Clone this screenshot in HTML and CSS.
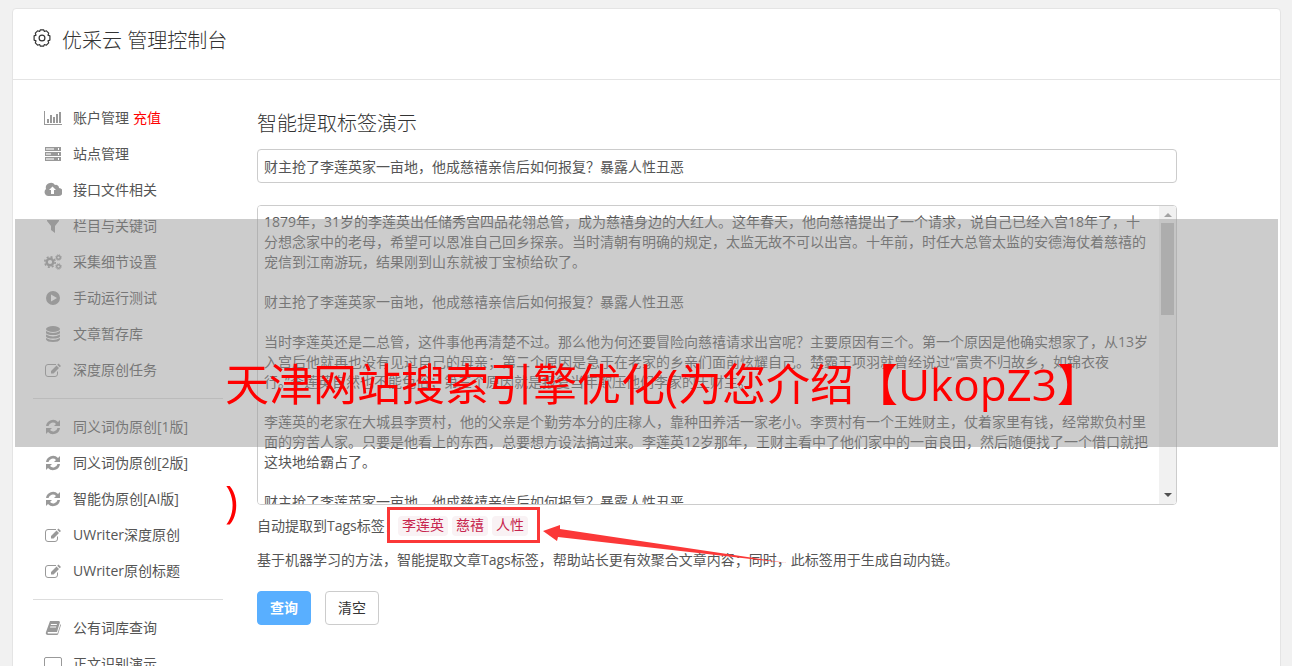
FILE: index.html
```html
<!DOCTYPE html>
<html lang="zh-CN">
<head>
    <meta charset="UTF-8">
    <meta name="viewport" content="width=device-width, initial-scale=1.0">
    <title>优采云 管理控制台</title>
    <link rel="stylesheet" href="styles.css">
</head>
<body>

    <!-- 图标 -->
    <svg class="sprite" width="0" height="0">
        <symbol id="i-chart" viewBox="0 0 18 16"><path d="M0 1h1v13h17v1H0zM3 9h2v4H3zM6 5h2v8H6zM9 7h2v6H9zM12 4h2v9h-2zM15 2h2v11h-2z"/></symbol>
        <symbol id="i-server" viewBox="0 0 18 16"><path fill-rule="evenodd" d="M1 1h16v4H1zM2 2v2h8V2zM14 2v2h1V2zM1 6h16v4H1zM2 7v2h5V7zM14 7v2h1V7zM1 11h16v4H1zM2 12v2h8v-2zM14 12v2h1v-2z"/><path opacity=".45" d="M2 2h8v2H2zM2 7h5v2H2zM2 12h8v2H2z"/></symbol>
        <symbol id="i-cloud" viewBox="0 0 18 16"><path fill-rule="evenodd" d="M4 14a4 4 0 0 1-2-7 5 5 0 0 1 9-4 3 3 0 0 1 4 3 4 4 0 0 1-1 8zM8.500 4.500L5 8h2v4h3V8h2z"/></symbol>
        <symbol id="i-filter" viewBox="0 0 18 16"><path d="M3 2h12v1l-4 5v7l-4-3V8L3 3z"/></symbol>
        <symbol id="i-cogs" viewBox="0 0 18 16"><g fill="none" stroke="currentColor"><circle cx="6" cy="8" r="3.300" stroke-width="2.400"/><circle cx="6" cy="8" r="5.200" stroke-width="1.600" stroke-dasharray="2.040 2.040"/><circle cx="14.500" cy="3.500" r="1.800" stroke-width="1.400"/><circle cx="14.500" cy="3.500" r="2.800" stroke-dasharray="1.100 1.100"/><circle cx="14.500" cy="12.500" r="1.800" stroke-width="1.400"/><circle cx="14.500" cy="12.500" r="2.800" stroke-dasharray="1.100 1.100"/></g></symbol>
        <symbol id="i-play" viewBox="0 0 18 16"><path fill-rule="evenodd" d="M9 1a7 7 0 1 0 0 14A7 7 0 1 0 9 1zM7 4.500l6 3.500-6 3.500z"/></symbol>
        <symbol id="i-db" viewBox="0 0 18 16"><ellipse cx="9" cy="3" rx="7" ry="3"/><path d="M2 5q7 4 14 0v2q-1 2-7 2T2 7zM2 8.500q7 4 14 0v2q-1 2-7 2t-7-2zM2 12q7 4 14 0v1.500q-1 2.500-7 2.500t-7-2.500z"/></symbol>
        <symbol id="i-edit" viewBox="0 0 18 16"><path fill="none" stroke="currentColor" d="M12 2.500H4a2.500 2.500 0 0 0-2.500 2.500v7A2.500 2.500 0 0 0 4 14.500h7a2.500 2.500 0 0 0 2.500-2.500V9.500"/><path d="M14.500 1.500l2.500 2.500-1.300 1.300-2.500-2.500zM12.500 3.500L15 6l-5.500 5.500H7V9z"/></symbol>
        <symbol id="i-sync" viewBox="0 0 18 16"><path d="M2 7a7 7 0 0 1 12-4l2-2v6h-6l2-2a4.400 4.400 0 0 0-7.500 2zM16 9a7 7 0 0 1-12 4l-2 2V9h6l-2 2a4.400 4.400 0 0 0 7.500-2z"/></symbol>
        <symbol id="i-book" viewBox="0 0 18 16"><path fill-rule="evenodd" d="M6 1h9l1 1-3 10H4q-1 .5 0 1.500h9.500L16.500 4l.5 1-3 9.500-1 .5H4q-3-.5-2-3zM7 4l-.3 1h6l.3-1zM6.300 6.500L6 7.500h6l.3-1z"/></symbol>
        <symbol id="i-screen" viewBox="0 0 18 16"><path fill="none" stroke="currentColor" d="M2 1.500h14q1.500 0 1.500 1.500v8q0 1.500-1.500 1.500H2Q.5 12.500.5 11V3q0-1.500 1.500-1.500zM6 15h6"/></symbol>
    </svg>

    <div class="panel">
        <header class="panel-header">
            <svg class="gear" viewBox="0 0 18 18" fill="none" stroke="currentColor" stroke-width="1.200" stroke-linejoin="round"><circle cx="9" cy="9" r="2.900"/><path d="M7.400.8h3.200l.8 1.700 2-.7 2.300 2.300-.7 2 1.900.8v4.200l-1.900.8.7 2-2.300 2.300-2-.7-.8 1.700H7.400l-.8-1.700-2 .7-2.300-2.300.7-2-1.900-.8V6.900l1.900-.8-.7-2 2.300-2.300 2 .7z"/></svg>
            <h1>优采云 管理控制台</h1>
        </header>

        <div class="panel-body">
            <nav class="sidebar">
                <a href="#"><svg><use href="#i-chart"/></svg>账户管理 <span class="recharge">充值</span></a>
                <a href="#"><svg><use href="#i-server"/></svg>站点管理</a>
                <a href="#"><svg><use href="#i-cloud"/></svg>接口文件相关</a>
                <a href="#"><svg><use href="#i-filter"/></svg>栏目与关键词</a>
                <a href="#"><svg><use href="#i-cogs"/></svg>采集细节设置</a>
                <a href="#"><svg><use href="#i-play"/></svg>手动运行测试</a>
                <a href="#"><svg><use href="#i-db"/></svg>文章暂存库</a>
                <a href="#"><svg><use href="#i-edit"/></svg>深度原创任务</a>
                <hr>
                <a href="#"><svg><use href="#i-sync"/></svg>同义词伪原创[1版]</a>
                <a href="#"><svg><use href="#i-sync"/></svg>同义词伪原创[2版]</a>
                <a href="#"><svg><use href="#i-sync"/></svg>智能伪原创[AI版]</a>
                <a href="#"><svg><use href="#i-edit"/></svg>UWriter深度原创</a>
                <a href="#"><svg><use href="#i-edit"/></svg>UWriter原创标题</a>
                <hr>
                <a href="#"><svg><use href="#i-book"/></svg>公有词库查询</a>
                <a href="#"><svg><use href="#i-screen"/></svg>正文识别演示</a>
            </nav>

            <main class="content">
                <h2>智能提取标签演示</h2>
                <input type="text" class="field" aria-label="标题" value="财主抢了李莲英家一亩地，他成慈禧亲信后如何报复？暴露人性丑恶">
                <div class="editor">
                    <textarea class="field" aria-label="正文">1879年，31岁的李莲英出任储秀宫四品花翎总管，成为慈禧身边的大红人。这年春天，他向慈禧提出了一个请求，说自己已经入宫18年了，十分想念家中的老母，希望可以恩准自己回乡探亲。当时清朝有明确的规定，太监无故不可以出宫。十年前，时任大总管太监的安德海仗着慈禧的宠信到江南游玩，结果刚到山东就被丁宝桢给砍了。

财主抢了李莲英家一亩地，他成慈禧亲信后如何报复？暴露人性丑恶

当时李莲英还是二总管，这件事他再清楚不过。那么他为何还要冒险向慈禧请求出宫呢？主要原因有三个。第一个原因是他确实想家了，从13岁入宫后他就再也没有见过自己的母亲；第二个原因是急于在老家的乡亲们面前炫耀自己。楚霸王项羽就曾经说过“富贵不归故乡，如锦衣夜
行。”李莲英自然也不能免俗；第三个原因就是报复当年欺压他们李家的王财主。

李莲英的老家在大城县李贾村，他的父亲是个勤劳本分的庄稼人，靠种田养活一家老小。李贾村有一个王姓财主，仗着家里有钱，经常欺负村里面的穷苦人家。只要是他看上的东西，总要想方设法搞过来。李莲英12岁那年，王财主看中了他们家中的一亩良田，然后随便找了一个借口就把这块地给霸占了。

财主抢了李莲英家一亩地，他成慈禧亲信后如何报复？暴露人性丑恶
</textarea>
                    <div class="scrollbar">
                        <svg viewBox="0 0 8 4"><path fill="#a3a3a3" d="M0 4l4-4 4 4z"/></svg>
                        <div class="thumb"></div>
                        <svg viewBox="0 0 8 4"><path fill="#505050" d="M0 0l4 4 4-4z"/></svg>
                    </div>
                </div>
                <div class="tags">
                    <span>自动提取到Tags标签：</span>
                    <div class="tag-box">
                        <code>李莲英</code><code>慈禧</code><code>人性</code>
                        <svg class="arrow" viewBox="0 0 246 50"><path d="M0 14L17 8v4l227 34L15 20l-1 4z"/></svg>
                    </div>
                </div>
                <p>基于机器学习的方法，智能提取文章Tags标签，帮助站长更有效聚合文章内容；同时，此标签用于生成自动内链。</p>
                <div class="buttons">
                    <button class="primary">查询</button>
                    <button>清空</button>
                </div>
            </main>
        </div>
    </div>

    <div class="band"></div>
    <div class="caption">天津网站搜索引擎优化(为您介绍【UkopZ3】<br>)</div>

</body>
</html>
```

FILE: styles.css
```css
* {
    box-sizing: border-box;
}
html {
    height: 100%;
    overflow: hidden;
}
body {
    height: 100%;
    margin: 0;
    padding: 8px 11px 0 12px;
    overflow: hidden;
    position: relative;
    background-color: #f1f1f1;
    color: #555;
    font-family: "Open Sans", "Noto Sans CJK SC", sans-serif;
    font-size: 14px;
    line-height: 20px;
}
.sprite {
    position: absolute;
}
.panel {
    background-color: #fff;
    border: 1px solid #e4e4e4;
    border-radius: 4px;
}
.panel-header {
    display: flex;
    align-items: flex-start;
    gap: 11px;
    height: 71px;
    padding: 18px 20px;
    border-bottom: 1px solid #e4e4e4;
    color: #333;
}
.gear {
    width: 18px;
    height: 18px;
    margin-top: 2px;
}
h1, h2 {
    margin: 0;
    color: #333;
    font-size: 20px;
    font-weight: 300;
    line-height: 28px;
}
.panel-body {
    display: flex;
    gap: 34px;
    padding: 20px;
}
.sidebar {
    flex: 0 0 190px;
}
.sidebar a {
    display: flex;
    align-items: center;
    height: 36px;
    padding-left: 11px;
    color: #555;
    text-decoration: none;
}
.sidebar svg {
    width: 18px;
    height: 16px;
    margin-right: 11px;
    color: #999;
    fill: #999;
}
.recharge {
    margin-left: 4px;
    color: #f00;
}
hr {
    height: 1px;
    margin: 10px 0;
    border: none;
    background-color: #ddd;
}
.content {
    flex: 1;
    padding: 10px 83px 0 0;
}
.field {
    display: block;
    width: 100%;
    padding: 6px;
    border: 1px solid #ccc;
    border-radius: 4px;
    outline: none;
    background-color: #fff;
    color: #555;
    font: inherit;
}
input.field {
    height: 34px;
    margin: 11px 0 22px;
}
.editor {
    position: relative;
}
textarea.field {
    height: 300px;
    padding-right: 26px;
    resize: none;
    scrollbar-width: none;
}
/* 自定义滚动条 */
.scrollbar {
    display: flex;
    flex-direction: column;
    align-items: center;
    position: absolute;
    top: 1px;
    right: 1px;
    bottom: 1px;
    width: 17px;
    padding: 7px 0;
    border-radius: 0 3px 3px 0;
    background-color: #f1f1f1;
}
.scrollbar svg {
    width: 8px;
    height: 4px;
}
.thumb {
    width: 13px;
    height: 92px;
    margin: 6px 0 auto;
    background-color: #c1c1c1;
}
.tags {
    display: flex;
    align-items: center;
    height: 36px;
    margin-top: 2px;
}
.tags > span {
    width: 130px;
    padding-top: 2px;
    white-space: nowrap;
}
.tag-box {
    display: flex;
    align-items: center;
    gap: 4px;
    width: 153px;
    height: 36px;
    padding: 2px 8px 0;
    border: 3px solid #fb3838;
    position: relative;
}
code {
    padding: 0 4px;
    border-radius: 4px;
    background-color: #f9f2f4;
    color: #c7254e;
    font-family: "Liberation Mono", "Noto Sans CJK SC", monospace;
    font-size: 14px;
}
.arrow {
    position: absolute;
    top: 7px;
    left: 153px;
    width: 246px;
    height: 50px;
    fill: #fb3838;
}
p {
    margin: 7px 0 21px;
}
.buttons {
    display: flex;
    gap: 14px;
}
button {
    width: 54px;
    height: 34px;
    padding: 0;
    border: 1px solid #ccc;
    border-radius: 4px;
    background-color: #fff;
    color: #333;
    font: inherit;
}
.primary {
    border-color: #59afff;
    background-color: #59afff;
    color: #fff;
    font-weight: bold;
}
.band {
    position: absolute;
    top: 219px;
    left: 15px;
    right: 14px;
    height: 228px;
    background-color: rgba(153, 153, 153, 0.5);
}
.caption {
    position: absolute;
    top: 326px;
    left: 225px;
    color: #f00;
    font-size: 44px;
    line-height: 116px;
    white-space: nowrap;
}
```
